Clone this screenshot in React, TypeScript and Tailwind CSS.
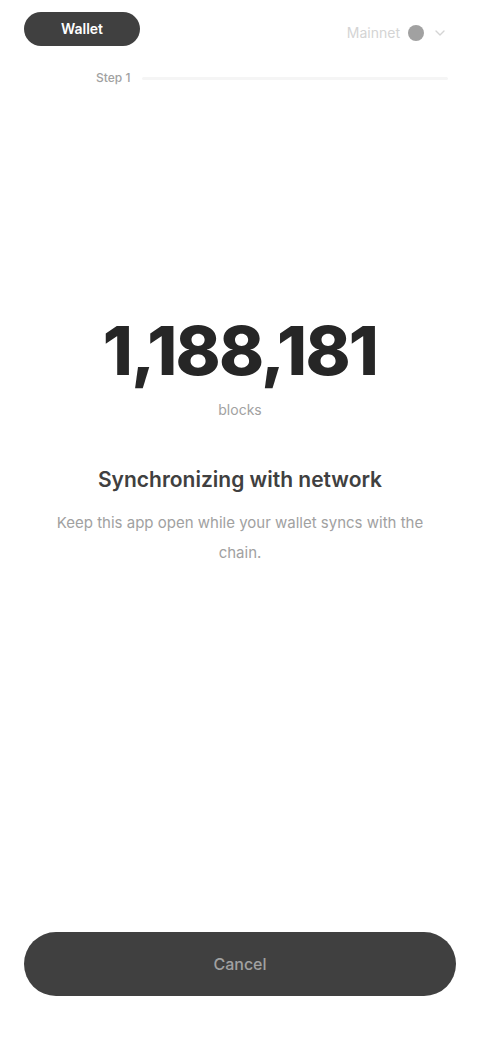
import { ChevronDown } from "lucide-react";

export default function App() {
  return (
    <div
      className="flex h-[1040px] w-[480px] flex-col bg-white text-neutral-900"
      style={{ fontFamily: "Inter, 'Noto Sans', sans-serif" }}
    >
      <header className="flex items-center justify-between px-6 pt-3">
        <div className="flex h-[34px] w-[116px] items-center justify-center rounded-full bg-neutral-700 text-sm font-semibold text-white">
          Wallet
        </div>
        <div className="flex items-center gap-2 pr-2 pt-2">
          <span className="text-sm text-neutral-300">Mainnet</span>
          <span className="h-4 w-4 rounded-full bg-neutral-400" />
          <ChevronDown className="h-4 w-4 text-neutral-300" />
        </div>
      </header>

      <div className="mt-6 px-8">
        <div className="flex items-center gap-3">
          <span className="ml-16 text-xs font-medium text-neutral-400">Step 1</span>
          <div className="h-[3px] flex-1 rounded-full bg-neutral-100" />
        </div>
      </div>

      <main className="flex flex-1 flex-col items-center pt-[230px]">
        <div className="text-[68px] font-extrabold leading-none tracking-tight text-neutral-800">
          1,188,181
        </div>
        <div className="mt-4 text-sm text-neutral-400">blocks</div>

        <div className="mt-11 text-[21px] font-semibold text-neutral-700">
          Synchronizing with network
        </div>
        <p className="mt-3 px-8 text-center text-[15px] leading-[30px] text-neutral-400">
          <span className="whitespace-nowrap">
            Keep this app open while your wallet syncs with the
          </span>
          <br />
          chain.
        </p>
      </main>

      <div className="px-6 pb-11">
        <button className="h-[64px] w-full rounded-full bg-neutral-700 text-base font-medium text-neutral-400">
          Cancel
        </button>
      </div>
    </div>
  );
}
